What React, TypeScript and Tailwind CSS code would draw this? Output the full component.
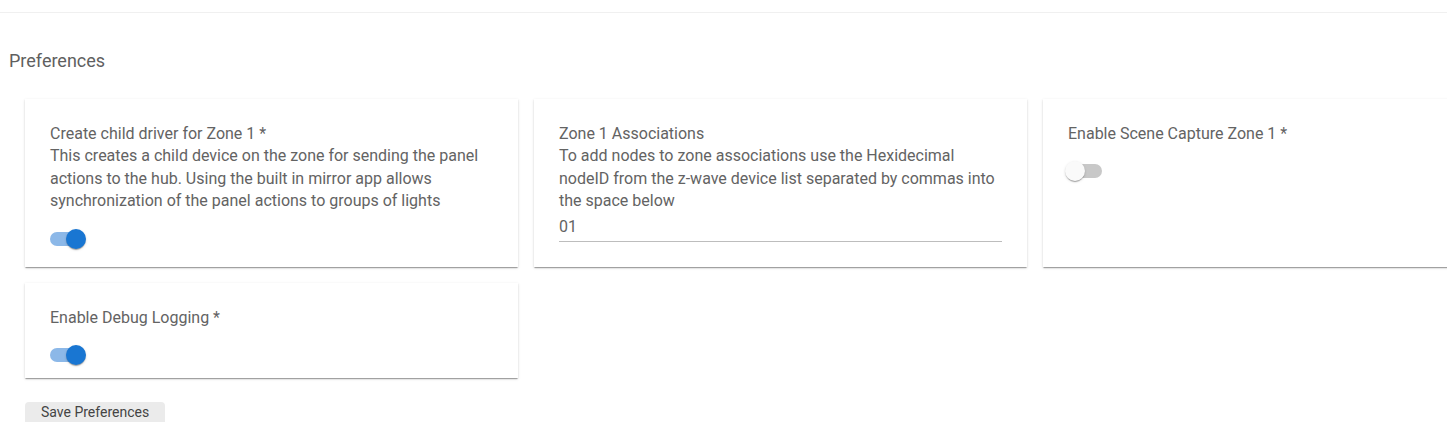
import { useState } from 'react';

function Toggle({ on, onChange }: { on: boolean; onChange: () => void }) {
  return (
    <button
      type="button"
      onClick={onChange}
      className="relative mt-[7px] h-[38px] w-[58px] -ml-[12px] shrink-0 cursor-pointer"
      aria-pressed={on}
    >
      <span
        className={`absolute left-[12px] top-[12px] h-[14px] w-[34px] rounded-full ${
          on ? 'bg-[#8cb8e8]' : 'bg-[#c8c8c8]'
        }`}
      />
      <span
        className={`absolute top-[9px] h-[20px] w-[20px] rounded-full shadow-[0_2px_1px_-1px_rgba(0,0,0,0.2),0_1px_1px_0_rgba(0,0,0,0.14),0_1px_3px_0_rgba(0,0,0,0.12)] ${
          on ? 'left-[28px] bg-[#1976d2]' : 'left-[9px] bg-[#fafafa]'
        }`}
      />
    </button>
  );
}

function Card({ children }: { children: React.ReactNode }) {
  return (
    <div className="flex flex-col bg-white px-[25px] pt-[24px] pb-[4px] shadow-[0_2px_1px_-1px_rgba(0,0,0,0.2),0_1px_1px_0_rgba(0,0,0,0.14),0_1px_3px_0_rgba(0,0,0,0.12)]">
      {children}
    </div>
  );
}

export default function App() {
  const [childDriver, setChildDriver] = useState(true);
  const [sceneCapture, setSceneCapture] = useState(false);
  const [debug, setDebug] = useState(true);
  const [assoc, setAssoc] = useState('01');

  return (
    <div
      className="h-[422px] w-full overflow-hidden bg-white text-[16px] leading-[1.4] text-[#636363]"
      style={{ fontFamily: 'Roboto, "Liberation Sans", sans-serif' }}
    >
      <div className="mt-[12px] h-px w-full bg-[#f0f0f0]" />

      <h2 className="pl-[9px] pt-[37px] text-[18px] leading-[22px] text-[#5f5f5f]">Preferences</h2>

      <div className="mt-[27px] grid grid-cols-[repeat(3,493px)] gap-4 pl-[25px]">
        <Card>
          <div>Create child driver for Zone 1 *</div>
          <div>
            This creates a child device on the zone for sending the panel actions to the hub. Using the built
            in mirror app allows synchronization of the panel actions to groups of lights
          </div>
          <Toggle on={childDriver} onChange={() => setChildDriver(!childDriver)} />
        </Card>

        <Card>
          <div>Zone 1 Associations</div>
          <div>
            To add nodes to zone associations use the Hexidecimal nodeID from the z-wave device list separated by
            commas into the space below
          </div>
          <input
            value={assoc}
            onChange={(e) => setAssoc(e.target.value)}
            className="mb-[21px] h-[29px] w-full border-b border-[#bdbdbd] bg-transparent pb-[1px] text-[16px] text-[#636363] outline-none"
          />
        </Card>

        <Card>
          <div>Enable Scene Capture Zone 1 *</div>
          <Toggle on={sceneCapture} onChange={() => setSceneCapture(!sceneCapture)} />
        </Card>

        <Card>
          <div>Enable Debug Logging *</div>
          <Toggle on={debug} onChange={() => setDebug(!debug)} />
        </Card>
      </div>

      <div className="mt-[24px] pl-[25px]">
        <button
          type="button"
          className="flex h-[36px] items-start rounded-t-[4px] bg-[#ebebeb] px-[16px] pt-[1px] text-[14px] leading-[18px] text-[#444]"
        >
          Save Preferences
        </button>
      </div>
    </div>
  );
}
